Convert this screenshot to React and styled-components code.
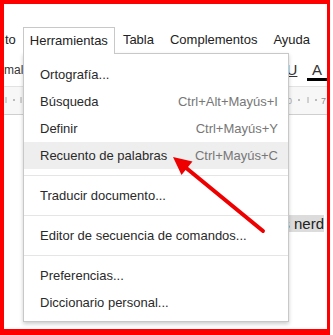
import React from 'react'
import styled, { createGlobalStyle } from 'styled-components'

const Global = createGlobalStyle`
  html, body { margin: 0; padding: 0; background: #fff; }
  body { font-family: "Liberation Sans", Arial, sans-serif; }
`

const Frame = styled.div`
  position: relative;
  box-sizing: border-box;
  width: 330px;
  height: 335px;
  border-style: solid;
  border-color: #f00;
  border-width: 4px 3px 6px 4px;
  overflow: hidden;
  display: flex;
  flex-direction: column;
  background: #fff;
`

const MenuBar = styled.div`
  display: flex;
  align-items: flex-end;
  height: 49px;
  font-size: 13px;
  color: #222;
`

const MenuItem = styled.div`
  height: 26px;
  line-height: 26px;
  padding: 0 8px 0 ${p => p.$first ? '1px' : '8px'};
  white-space: nowrap;
`

const ActiveTab = styled.div`
  position: relative;
  z-index: 3;
  box-sizing: border-box;
  height: 27px;
  margin-bottom: -1px;
  line-height: 25px;
  padding: 0 6px;
  background: #fff;
  border: 1px solid #c8c8c8;
  border-bottom: none;
  margin-left: -1px;
`

const Toolbar = styled.div`
  display: flex;
  align-items: center;
  justify-content: space-between;
  height: 33px;
  border-bottom: 1px solid #e2e2e2;
  font-size: 12px;
  color: #333;
`

const ToolGroup = styled.div`
  display: flex;
  align-items: center;
  height: 100%;
`

const ToolButton = styled.div`
  position: relative;
  width: ${p => p.$w}px;
  height: 100%;
  display: flex;
  align-items: center;
  justify-content: center;
  font-size: 15px;
  color: #333;
  text-decoration: ${p => p.$under ? 'underline' : 'none'};
`

const ColorBar = styled.div`
  position: absolute;
  left: 0;
  right: -4px;
  bottom: 5px;
  height: 3px;
  background: #000;
`

const Ruler = styled.div`
  height: 27px;
  background: #f7f7f7;
  border-bottom: 1px solid #cfcfcf;
  display: flex;
  align-items: center;
  justify-content: space-between;
`

const Page = styled.div`
  flex: 1;
  display: flex;
  flex-direction: column;
  align-items: flex-end;
  padding-top: 100px;
  padding-right: 3px;
`

const Highlight = styled.span`
  font-size: 15px;
  line-height: 17px;
  color: #222;
  background: #dcdcdc;
  white-space: nowrap;
`

const Dropdown = styled.div`
  position: absolute;
  z-index: 2;
  left: 19px;
  top: 49px;
  box-sizing: border-box;
  width: 266px;
  padding: 7px 0 5px;
  background: #fff;
  border: 1px solid #c8c8c8;
  box-shadow: 0 2px 4px rgba(0, 0, 0, 0.2);
  font-size: 13px;
`

const Row = styled.div`
  display: flex;
  justify-content: space-between;
  align-items: center;
  height: 27px;
  padding: 0 10px 0 16px;
  color: #2a2a2a;
  background: ${p => p.$active ? '#eeeeee' : 'transparent'};
  white-space: nowrap;
`

const Shortcut = styled.span`
  color: #777;
`

const Separator = styled.div`
  height: 1px;
  margin: 6px 0;
  background: #e5e5e5;
`

const Arrow = styled.svg`
  position: absolute;
  z-index: 4;
  left: 0;
  top: 0;
  pointer-events: none;
`

const items = [
  ['Ortografía...'],
  ['Búsqueda', 'Ctrl+Alt+Mayús+I'],
  ['Definir', 'Ctrl+Mayús+Y'],
  ['Recuento de palabras', 'Ctrl+Mayús+C', true],
  '-',
  ['Traducir documento...'],
  '-',
  ['Editor de secuencia de comandos...'],
  '-',
  ['Preferencias...'],
  ['Diccionario personal...'],
]

function RulerTicks({ right }) {
  return (
    <svg width="40" height="27" viewBox="0 0 40 27">
      {right ? (
        <g fill="#aaa" stroke="#aaa">
          <text x="0" y="17" fontSize="9" stroke="none" fontFamily="Liberation Sans, sans-serif">0</text>
          <circle cx="12" cy="13" r="0.6" />
          <line x1="21" y1="10" x2="21" y2="16" strokeWidth="1" />
          <circle cx="29" cy="13" r="0.6" />
          <text x="34" y="17" fontSize="9" stroke="none" fill="#888" fontFamily="Liberation Sans, sans-serif">7</text>
        </g>
      ) : (
        <g fill="#aaa" stroke="#aaa">
          <line x1="2" y1="10" x2="2" y2="16" strokeWidth="1" />
          <circle cx="10" cy="13" r="0.6" />
          <line x1="17" y1="10" x2="17" y2="16" strokeWidth="1" />
        </g>
      )}
    </svg>
  )
}

export default function App() {
  return (
    <>
      <Global />
      <Frame>
        <MenuBar>
          <MenuItem $first>to</MenuItem>
          <ActiveTab>Herramientas</ActiveTab>
          <MenuItem>Tabla</MenuItem>
          <MenuItem>Complementos</MenuItem>
          <MenuItem>Ayuda</MenuItem>
        </MenuBar>
        <Toolbar>
          <span>mal</span>
          <ToolGroup>
            <ToolButton $w={14} $under>U</ToolButton>
            <ToolButton $w={8} />
            <ToolButton $w={20}>A<ColorBar /></ToolButton>
          </ToolGroup>
        </Toolbar>
        <Ruler>
          <RulerTicks />
          <RulerTicks right />
        </Ruler>
        <Page>
          <Highlight>para los nerd</Highlight>
        </Page>

        <Dropdown>
          {items.map((it, i) =>
            it === '-' ? (
              <Separator key={i} />
            ) : (
              <Row key={i} $active={it[2]}>
                <span>{it[0]}</span>
                {it[1] && <Shortcut>{it[1]}</Shortcut>}
              </Row>
            )
          )}
        </Dropdown>

        <Arrow width="326" height="325" viewBox="0 0 326 325">
          <line x1="259" y1="227" x2="181" y2="163" stroke="#ee0000" strokeWidth="4" strokeLinecap="round" />
          <polygon points="169,153 188.5,157.5 177.5,171" fill="#ee0000" />
        </Arrow>
      </Frame>
    </>
  )
}
